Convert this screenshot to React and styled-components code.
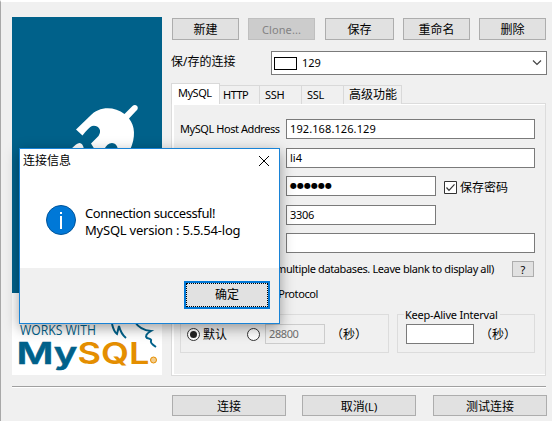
import React from "react";
import styled, { createGlobalStyle } from "styled-components";

const Global = createGlobalStyle`
  * { box-sizing: border-box; }
  body { margin: 0; overflow: hidden; background: #f0f0f0; }
`;

const Window = styled.main`
  position: relative;
  width: 552px;
  height: 421px;
  overflow: hidden;
  background: #f0f0f0;
  border-top: 2px solid #fff;
  border-left: 1px solid #a8a8a8;
  font: 12px/16px "Noto Sans", "Noto Sans CJK SC", sans-serif;
  color: #000;
`;

const Body = styled.div`
  display: flex;
  padding: 15px 0 0 11px;
  gap: 9px;
  height: 384px;
`;

const Brand = styled.aside`
  width: 150px;
  height: 358px;
  flex: none;
  svg { display: block; }
`;

const Content = styled.section`
  width: 377px;
  padding-top: 1px;
`;

const Toolbar = styled.div`
  display: flex;
  height: 22px;
  padding-left: 1px;
`;

const Button = styled.button`
  flex: none;
  width: ${(p) => p.$w || 67}px;
  height: ${(p) => p.$h || 22}px;
  margin: 0 0 0 ${(p) => p.$gap || 0}px;
  padding: 0;
  border: 1px solid ${(p) => (p.disabled ? "#bfbfbf" : "#adadad")};
  background: ${(p) => (p.disabled ? "#cccccc" : "#e1e1e1")};
  color: ${(p) => (p.disabled ? "#838383" : "#000")};
  font: inherit;
  line-height: ${(p) => p.$lh || 21}px;
`;

const Caption = styled.span`
  font-size: 11px;
  white-space: nowrap;
  letter-spacing: ${(p) => p.$ls || 0}px;
`;

const SavedRow = styled.div`
  display: flex;
  height: 24px;
  margin-top: 11px;
`;

const SavedLabel = styled.label`
  width: 100px;
  padding-top: 3px;
`;

const Combo = styled.div`
  display: flex;
  align-items: center;
  width: 276px;
  height: 24px;
  padding: 0 4px 0 2px;
  border: 1px solid #7a7a7a;
  background: #fff;
  svg { margin-left: auto; }
`;

const Swatch = styled.i`
  width: 23px;
  height: 13px;
  margin-right: 5px;
  border: 1px solid #000;
`;

const Tabs = styled.nav`
  display: flex;
  align-items: flex-end;
  height: 21px;
  margin-top: 8px;
`;

const Tab = styled.div`
  position: relative;
  z-index: ${(p) => (p.$active ? 1 : 0)};
  width: ${(p) => p.$w}px;
  height: ${(p) => (p.$active ? 21 : 19)}px;
  padding: 1px 0 0 ${(p) => p.$pl}px;
  border: 1px solid #d9d9d9;
  border-left-width: ${(p) => (p.$active ? 1 : 0)}px;
  border-bottom: 0;
  background: ${(p) => (p.$active ? "#fff" : "#f0f0f0")};
  white-space: nowrap;
`;

const Panel = styled.div`
  width: 375px;
  height: 273px;
  margin-top: -1px;
  border: 1px solid #dcdcdc;
  box-shadow: inset 2px 1px #fff, inset 0 -1px #fff;
  padding: 15px 0 0 8px;
`;

const Field = styled.div`
  display: flex;
  height: 20px;
  margin-bottom: ${(p) => p.$mb}px;
`;

const FieldLabel = styled.label`
  width: 106px;
  flex: none;
  padding-top: 2px;
  white-space: nowrap;
`;

const Input = styled.div`
  flex: none;
  width: ${(p) => p.$w}px;
  height: 20px;
  margin-left: ${(p) => p.$ml || 0}px;
  padding: 1px 0 0 3px;
  border: 1px solid ${(p) => (p.$off ? "#cccccc" : "#7a7a7a")};
  background: ${(p) => (p.$off ? "#f0f0f0" : "#fff")};
  color: ${(p) => (p.$off ? "#6d6d6d" : "#000")};
  white-space: nowrap;
`;

const Dots = styled.div`
  font: 8px/15px "DejaVu Sans", sans-serif;
  letter-spacing: 0;
`;

const Check = styled.label`
  display: flex;
  align-items: center;
  gap: 3px;
  padding: 3px 0 0 8px;
`;

const HelpRow = styled.div`
  display: flex;
  justify-content: flex-end;
  height: 16px;
  width: 354px;
  gap: 18px;
`;

const Protocol = styled.div`
  width: 138px;
  margin-top: 9px;
  height: 16px;
  display: flex;
  justify-content: flex-end;
`;

const Groups = styled.div`
  display: flex;
  gap: 8px;
  margin-top: 12px;
`;

const Group = styled.div`
  position: relative;
  display: flex;
  align-items: center;
  width: ${(p) => p.$w}px;
  height: 39px;
  padding: 1px 0 0 ${(p) => p.$pl}px;
  border: 1px solid #dcdcdc;
  svg { flex: none; }
`;

const Legend = styled.div`
  position: absolute;
  left: 6px;
  top: -8px;
  padding: 0 2px 0 1px;
  background: #f0f0f0;
`;

const RadioText = styled.span`
  flex: none;
  width: 47px;
  padding: 2px 0 0 3px;
`;

const Seconds = styled.span`
  margin-left: 6px;
  padding-top: 2px;
`;

const Footer = styled.footer`
  display: flex;
  width: 534px;
  margin-left: 11px;
  border-top: 1px solid #a0a0a0;
  box-shadow: inset 0 1px #fff;
  padding: 8px 0 0 160px;
`;

const Dialog = styled.section`
  position: absolute;
  left: 18px;
  top: 146px;
  width: 261px;
  height: 176px;
  display: flex;
  flex-direction: column;
  border: 1px solid #1883d7;
  background: #fff;
  box-shadow: 0 4px 13px rgba(0, 0, 0, 0.38);
`;

const TitleBar = styled.header`
  display: flex;
  justify-content: space-between;
  height: 24px;
  padding: 4px 9px 0 3px;
  svg { margin-top: 2px; }
`;

const Message = styled.div`
  display: flex;
  height: 95px;
  padding: 32px 0 0 26px;
  font-size: 13px;
  line-height: 17px;
`;

const MessageText = styled.div`
  padding: 0 0 0 9px;
`;

const Line = styled.div`
  white-space: nowrap;
  letter-spacing: ${(p) => p.$ls}px;
`;

const DialogFooter = styled.footer`
  flex: 1;
  padding: 13px 0 0 164px;
  background: #f0f0f0;
`;

const OkButton = styled.button`
  display: block;
  width: 86px;
  height: 28px;
  padding: 0;
  border: 2px solid #0078d7;
  outline: 1px dotted #000;
  outline-offset: -3px;
  background: #e1e1e1;
  color: #000;
  font: inherit;
`;

const Artwork = () => (
  <svg width="150" height="358" viewBox="12 17 150 358">
    <path fill="#00618a" d="M12 17h150v276H12z" />
    <path fill="#fff" d="M12 293h150v82H12z" />
    <path fill="#fff" d="M76 129.500L90 116C99 106 114 106 124.500 114L132.500 106Q135 104 137.500 106.500Q138.500 109 136 111L129 118.500C135 126 136 137 130 150H118Q117 143 112 143Q107 143 104 150H95L91 143.500L98.500 136Q101 132 99.500 129Q97 125 92 126Q89 127 82.500 135.500z" />
    <path fill="#fff" d="M71 149L76 144.500Q82 140 84 149z" />
    <text x="20" y="334.500" fill="#00618a" fontSize="14" fontFamily="Open Sans, sans-serif" textLength="76" lengthAdjust="spacingAndGlyphs">WORKS WITH</text>
    <text x="16.500" y="363.500" fill="#00618a" stroke="#00618a" strokeWidth=".5" fontSize="30" fontWeight="600" fontFamily="Inter, sans-serif" textLength="61" lengthAdjust="spacingAndGlyphs">My</text>
    <text x="77.500" y="363.500" fill="#e48e00" fontSize="30" fontWeight="600" fontFamily="Inter, sans-serif" textLength="72" lengthAdjust="spacingAndGlyphs">SQL</text>
    <circle cx="153.500" cy="360" r="3" fill="#f3cc8c" stroke="#e48e00" />
    <g fill="none" stroke="#00618a" strokeWidth="2">
      <path d="M112 324Q114 332 117 334L119 326Q121 334 126 338" />
      <path d="M135 322Q140 330 151 331Q144 335 147 338Q152 339 151 341Q150 343 156 347" />
    </g>
  </svg>
);

const CheckBox = () => (
  <svg width="13" height="13" fill="none">
    <path fill="#fff" stroke="#333" d="M.5.5h12v12H.5z" />
    <path stroke="#333" strokeWidth="1.200" d="M2.500 6.500L5 9.300l5.500-6" />
  </svg>
);

const Radio = ({ on }) => (
  <svg width="13" height="13">
    <circle cx="6.500" cy="6.500" r="6" fill="#fff" stroke="#333" />
    {on && <circle cx="6.500" cy="6.500" r="3.500" fill="#222" />}
  </svg>
);

const InfoIcon = () => (
  <svg width="30" height="30">
    <circle cx="15" cy="15" r="14.500" fill="#0078d7" stroke="#00549a" />
    <path fill="#fff" d="M14 7h2v2h-2zM14 11h2v13h-2z" />
  </svg>
);

const Close = () => (
  <svg width="12" height="12" stroke="#000" strokeWidth="1">
    <path d="M1 1l10 10M11 1L1 11" />
  </svg>
);

const Chevron = () => (
  <svg width="10" height="6" fill="none" stroke="#444" strokeWidth="1.200">
    <path d="M1 .5l4 4 4-4" />
  </svg>
);

export default function App() {
  return (
    <>
      <Global />
      <Window>
        <Body>
          <Brand><Artwork /></Brand>
          <Content>
            <Toolbar>
              <Button>新建</Button>
              <Button disabled $gap={9}><Caption $ls={0.1}>Clone...</Caption></Button>
              <Button $w={69} $gap={10}>保存</Button>
              <Button $gap={9}>重命名</Button>
              <Button $gap={9}>删除</Button>
            </Toolbar>
            <SavedRow>
              <SavedLabel>保/存的连接</SavedLabel>
              <Combo><Swatch /><Caption>129</Caption><Chevron /></Combo>
            </SavedRow>
            <Tabs>
              <Tab $active $w={49} $pl={6}><Caption $ls={-0.5}>MySQL</Caption></Tab>
              <Tab $w={40} $pl={3}><Caption $ls={-0.5}>HTTP</Caption></Tab>
              <Tab $w={42} $pl={5}><Caption $ls={-0.3}>SSH</Caption></Tab>
              <Tab $w={42} $pl={5}><Caption $ls={-0.3}>SSL</Caption></Tab>
              <Tab $w={58} $pl={5}>高级功能</Tab>
            </Tabs>
            <Panel>
              <Field $mb={9}><FieldLabel><Caption $ls={-0.43}>MySQL Host Address</Caption></FieldLabel><Input $w={249}><Caption $ls={0.1}>192.168.126.129</Caption></Input></Field>
              <Field $mb={8}><FieldLabel /><Input $w={249}><Caption>li4</Caption></Input></Field>
              <Field $mb={9}><FieldLabel /><Input $w={150}><Dots>●●●●●●</Dots></Input><Check><CheckBox />保存密码</Check></Field>
              <Field $mb={8}><FieldLabel /><Input $w={150}><Caption $ls={-0.3}>3306</Caption></Input></Field>
              <Field $mb={8}><FieldLabel /><Input $w={249} /></Field>
              <HelpRow><Caption $ls={-0.38}>multiple databases. Leave blank to display all)</Caption><Button $w={22} $h={16} $lh={16}><Caption>?</Caption></Button></HelpRow>
              <Protocol><Caption $ls={-0.4}>Protocol</Caption></Protocol>
              <Groups>
                <Group $w={209} $pl={6}><Radio on /><RadioText>默认</RadioText><Radio /><Input $off $w={60} $ml={5}><Caption $ls={-0.4}>28800</Caption></Input><Seconds>（秒）</Seconds></Group>
                <Group $w={138} $pl={8}><Legend><Caption $ls={-0.22}>Keep-Alive Interval</Caption></Legend><Input $w={68} /><Seconds>（秒）</Seconds></Group>
              </Groups>
            </Panel>
          </Content>
        </Body>
        <Footer>
          <Button $w={114} $h={21}>连接</Button>
          <Button $w={114} $h={21} $gap={16}>取消<Caption>(L)</Caption></Button>
          <Button $w={114} $h={21} $gap={17}>测试连接</Button>
        </Footer>
        <Dialog>
          <TitleBar>连接信息<Close /></TitleBar>
          <Message><InfoIcon /><MessageText><Line $ls={-0.4}>Connection successful!</Line><Line $ls={-0.22}>MySQL version : 5.5.54-log</Line></MessageText></Message>
          <DialogFooter><OkButton>确定</OkButton></DialogFooter>
        </Dialog>
      </Window>
    </>
  );
}
